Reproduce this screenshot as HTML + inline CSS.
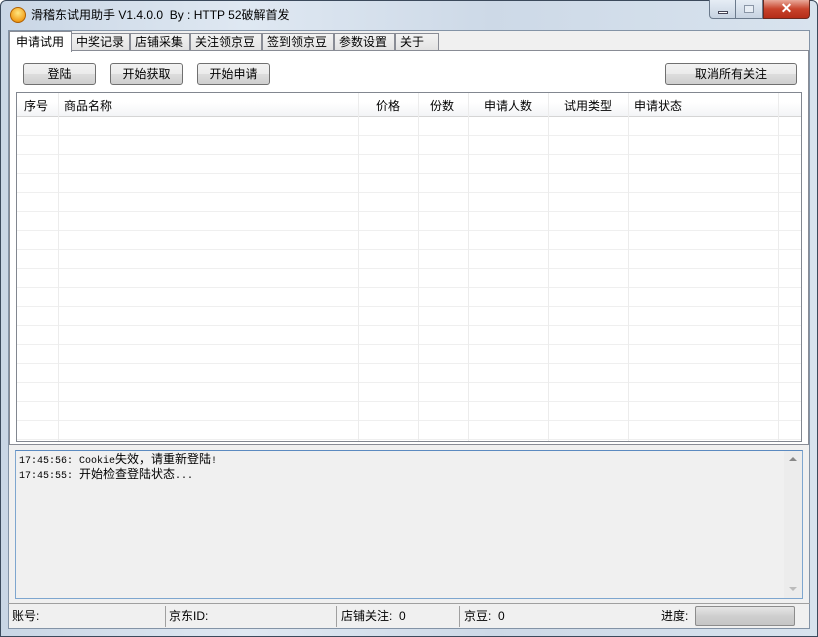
<!DOCTYPE html><html><head><meta charset="utf-8"><style>
*{margin:0;padding:0;box-sizing:border-box}
body{width:818px;height:637px;overflow:hidden;background:#fff;font-family:"Liberation Sans","Noto Sans CJK SC","WenQuanYi Zen Hei",sans-serif;font-size:12px;color:#000;position:relative}
.a{position:absolute}
.btn{position:absolute;height:22px;border:1px solid #707070;border-radius:3px;background:linear-gradient(#f2f2f2 0,#ebebeb 50%,#dddddd 51%,#cfcfcf 100%);text-align:center;line-height:21px;font-size:12px}
.tab{position:absolute;top:33px;height:17px;border:1px solid #898c95;border-bottom:none;background:linear-gradient(#f3f3f3,#e2e2e2);line-height:17px;padding-left:4px;font-size:12px}
.hd{position:absolute;top:1px;height:23px;line-height:25px;font-size:12px}
.m{font-family:"Liberation Mono",monospace;font-size:10px}
</style></head><body>
<div class="a" style="left:0;top:0;width:818px;height:637px;border:1px solid #3c4a5c;border-radius:6px 6px 0 0;background:linear-gradient(90deg,#c9d6e5,#dfe8f2 30%,#cdd9e7 60%,#d8e3ee)"></div>
<div class="a" style="left:10px;top:7px;width:16px;height:16px;border-radius:50%;background:radial-gradient(circle at 50% 35%,#ffe680,#f2a01c 70%,#c46d00);border:1px solid #b06000"></div>
<div class="a" style="left:31px;top:6px;font-size:12px;line-height:18px">滑稽东试用助手 V1.4.0.0&nbsp; By : HTTP 52破解首发</div>
<div class="a" style="left:709px;top:0;width:27px;height:19px;border:1px solid #6b7a8c;border-top:none;border-radius:0 0 0 4px;background:linear-gradient(#e6edf5,#c7d3e1)"><div class="a" style="left:8px;top:11px;width:10px;height:3px;background:#fff;border:1px solid #445"></div></div>
<div class="a" style="left:736px;top:0;width:27px;height:19px;border:1px solid #6b7a8c;border-top:none;border-left:none;background:linear-gradient(#e6edf5,#c7d3e1)"><div class="a" style="left:8px;top:5px;width:10px;height:8px;border:1px solid #8a96a6;background:#e8eef5"></div></div>
<div class="a" style="left:763px;top:0;width:47px;height:19px;border:1px solid #6b2a20;border-top:none;border-radius:0 0 4px 0;background:linear-gradient(#e9a99a,#c8432c 50%,#b52d18);color:#fff;text-align:center;font-weight:bold;font-size:14px;line-height:17px">✕</div>
<div class="a" style="left:8px;top:30px;width:802px;height:599px;background:#f0f0f0;border:1px solid #8393a6"></div>
<div class="tab" style="left:71px;width:59px">中奖记录</div>
<div class="tab" style="left:130px;width:60px">店铺采集</div>
<div class="tab" style="left:190px;width:72px">关注领京豆</div>
<div class="tab" style="left:262px;width:72px">签到领京豆</div>
<div class="tab" style="left:334px;width:61px">参数设置</div>
<div class="tab" style="left:395px;width:44px">关于</div>
<div class="a" style="left:9px;top:50px;width:800px;height:395px;background:#fff;border:1px solid #898c95"></div>
<div class="a" style="left:9px;top:31px;width:63px;height:21px;background:#fff;border:1px solid #898c95;border-bottom:none;padding-left:6px;line-height:20px;font-size:12px">申请试用</div>
<div class="btn" style="left:23px;top:63px;width:73px">登陆</div>
<div class="btn" style="left:110px;top:63px;width:73px">开始获取</div>
<div class="btn" style="left:197px;top:63px;width:73px">开始申请</div>
<div class="btn" style="left:665px;top:63px;width:132px">取消所有关注</div>
<div class="a" style="left:16px;top:92px;width:786px;height:350px;border:1px solid #828790;background:#fff;overflow:hidden">
<div class="a" style="left:0;top:0;width:786px;height:24px;background:linear-gradient(#fff 0,#fff 40%,#f3f4f6 100%);border-bottom:1px solid #d5d5d5"></div>
<div class="a" style="left:0;top:24px;width:786px;height:330px;background:repeating-linear-gradient(#fff 0,#fff 18px,#efefef 18px,#efefef 19px)"></div>
<div class="a" style="left:41px;top:0;width:1px;height:350px;background:#ececec"></div>
<div class="a" style="left:341px;top:0;width:1px;height:350px;background:#ececec"></div>
<div class="a" style="left:401px;top:0;width:1px;height:350px;background:#ececec"></div>
<div class="a" style="left:451px;top:0;width:1px;height:350px;background:#ececec"></div>
<div class="a" style="left:531px;top:0;width:1px;height:350px;background:#ececec"></div>
<div class="a" style="left:611px;top:0;width:1px;height:350px;background:#ececec"></div>
<div class="a" style="left:761px;top:0;width:1px;height:350px;background:#ececec"></div>
<div class="hd" style="left:7px">序号</div>
<div class="hd" style="left:47px">商品名称</div>
<div class="hd" style="left:359px">价格</div>
<div class="hd" style="left:413px">份数</div>
<div class="hd" style="left:467px">申请人数</div>
<div class="hd" style="left:547px">试用类型</div>
<div class="hd" style="left:617px">申请状态</div>
</div>
<div class="a" style="left:15px;top:450px;width:788px;height:149px;border:1px solid #7ea6cf;border-top-color:#5b8ac0;background:#f0f0f0"></div>
<div class="a" style="left:784px;top:451px;width:18px;height:147px;background:#ececec"></div>
<div class="a" style="left:789px;top:457px;width:0;height:0;border-left:4px solid transparent;border-right:4px solid transparent;border-bottom:4px solid #888"></div>
<div class="a" style="left:789px;top:587px;width:0;height:0;border-left:4px solid transparent;border-right:4px solid transparent;border-top:4px solid #bbb"></div>
<div class="a" style="left:19px;top:453px;font-size:12px;line-height:13px;white-space:pre"><span class="m">17:45:56: Cookie</span>失效，请重新登陆<span class="m">!</span>
<span class="m">17:45:55: </span>开始检查登陆状态<span class="m">...</span></div>
<div class="a" style="left:8px;top:603px;width:802px;height:1px;background:#a0a0a0"></div>
<div class="a" style="left:12px;top:608px;line-height:16px">账号:</div>
<div class="a" style="left:165px;top:606px;width:1px;height:21px;background:#a0a0a0"></div>
<div class="a" style="left:169px;top:608px;line-height:16px">京东ID:</div>
<div class="a" style="left:336px;top:606px;width:1px;height:21px;background:#a0a0a0"></div>
<div class="a" style="left:341px;top:608px;line-height:16px">店铺关注:&nbsp; 0</div>
<div class="a" style="left:459px;top:606px;width:1px;height:21px;background:#a0a0a0"></div>
<div class="a" style="left:464px;top:608px;line-height:16px">京豆:&nbsp; 0</div>
<div class="a" style="left:661px;top:608px;line-height:16px">进度:</div>
<div class="a" style="left:695px;top:606px;width:100px;height:20px;border:1px solid #8c8c8c;border-radius:2px;background:linear-gradient(#e6e6e6,#cfcfcf 50%,#c6c6c6)"></div>
</body></html>
